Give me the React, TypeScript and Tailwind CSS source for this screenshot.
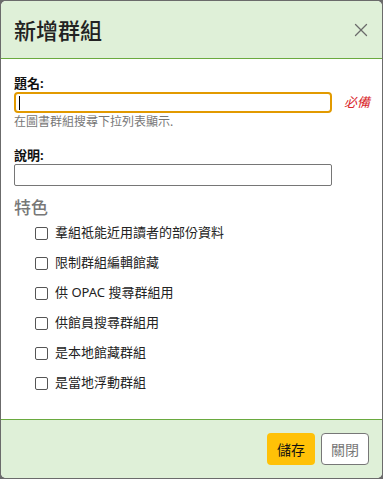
import { X } from "lucide-react";

const features = [
  "羣組祗能近用讀者的部份資料",
  "限制群組編輯館藏",
  "供 OPAC 搜尋群組用",
  "供館員搜尋群組用",
  "是本地館藏群組",
  "是當地浮動群組",
];

const App = () => {
  return (
    <div
      className="h-[479px] w-[383px] bg-[#6b6b6b] p-px"
      style={{ fontFamily: '"Noto Sans", "Noto Sans CJK TC", sans-serif' }}
    >
      <div className="flex h-full flex-col overflow-hidden rounded-[5px] bg-white">
        <div className="flex h-[58px] shrink-0 items-center justify-between border-b border-[#6aaa3f] bg-[#dff0d8] pl-[13px] pr-[10px]">
          <h1 className="text-[22px] font-medium leading-none text-[#222]">新增群組</h1>
          <X className="h-[22px] w-[22px] text-[#6b6b6b]" strokeWidth={1.4} />
        </div>

        <div className="flex-1 px-[13px] pt-[16px]">
          <label className="block text-[13px] font-bold leading-[16px] text-[#111]">題名:</label>
          <div className="mt-[1px] flex items-center">
            <div className="flex h-[21px] w-[318px] shrink-0 items-center rounded-[4px] border-2 border-[#e29a00] pl-[3px]">
              <span className="h-[14px] w-px bg-black" />
            </div>
            <span className="ml-[12px] whitespace-nowrap text-[13px] italic leading-none text-[#d9262a]">必備</span>
          </div>
          <p className="mt-[1px] text-[12px] leading-[16px] text-[#777]">在圖書群組搜尋下拉列表顯示.</p>

          <label className="mt-[17px] block text-[13px] font-bold leading-[16px] text-[#111]">說明:</label>
          <div className="mt-[1px] h-[22px] w-[318px] rounded-[2px] border border-[#767676]" />

          <h2 className="mt-[10px] text-[17px] font-medium leading-[24px] text-[#777]">特色</h2>

          <ul className="mt-[4px] flex flex-col gap-[12px] pl-[21px]">
            {features.map((f) => (
              <li key={f} className="flex h-[18px] items-center">
                <span className="h-[13px] w-[13px] rounded-[2px] border border-[#555] bg-white" />
                <span className="ml-[7px] text-[13px] text-[#222]">{f}</span>
              </li>
            ))}
          </ul>
        </div>

        <div className="flex h-[59px] shrink-0 items-center justify-end gap-[6px] border-t border-[#6aaa3f] bg-[#dff0d8] pr-[13px]">
          <button className="h-[32px] w-[48px] rounded-[4px] bg-[#ffc107] text-[14px] text-[#111]">儲存</button>
          <button className="h-[32px] w-[48px] rounded-[4px] border border-[#777] bg-white text-[14px] text-[#777]">關閉</button>
        </div>
      </div>
    </div>
  );
};

export default App;
